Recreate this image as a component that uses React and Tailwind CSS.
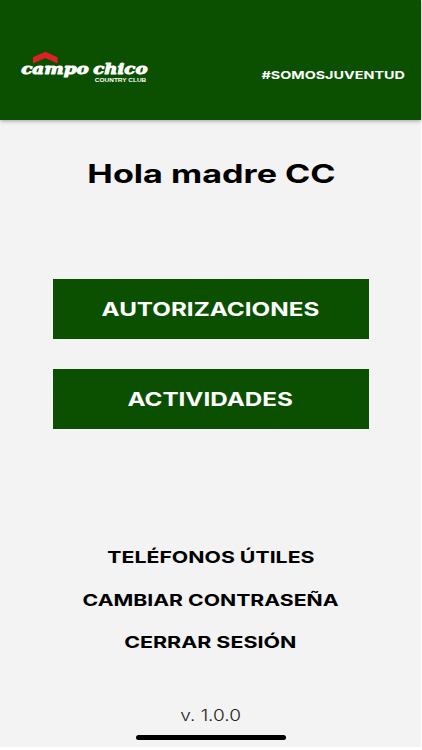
const menuItems = ['AUTORIZACIONES', 'ACTIVIDADES'];

const links = [
  { label: 'TELÉFONOS ÚTILES', stretch: 'scale-x-[1.33]' },
  { label: 'CAMBIAR CONTRASEÑA', stretch: 'scale-x-[1.325]' },
  { label: 'CERRAR SESIÓN', stretch: 'scale-x-[1.34]' },
];

function Logo() {
  return (
    <svg className="w-[132px] h-9" viewBox="0 0 132 36" aria-label="Campo Chico Country Club">
      <path d="M13 6.2 L25.3 0.8 L37.5 6.2 V12.4 L25.3 7 L13 12.4 Z" fill="#df2027" />
      <g
        fill="#fff"
        stroke="#fff"
        strokeWidth="1"
        strokeLinejoin="round"
        fontFamily="'DejaVu Serif', serif"
        fontWeight="700"
        fontStyle="italic"
        fontSize="15.5"
      >
        <text x="1.2" y="23.3" textLength="67.6" lengthAdjust="spacingAndGlyphs">campo</text>
        <text x="73.2" y="23.3" textLength="54.3" lengthAdjust="spacingAndGlyphs">chico</text>
      </g>
      <text
        x="74.8"
        y="30.8"
        fill="#fff"
        fontFamily="'Liberation Sans', sans-serif"
        fontWeight="700"
        fontSize="6"
        textLength="51.5"
        lengthAdjust="spacingAndGlyphs"
      >
        COUNTRY CLUB
      </text>
    </svg>
  );
}

function Header() {
  return (
    <header className="h-[120px] shrink-0 bg-[#0a5000] shadow-[0_1px_4px_rgba(0,0,0,0.35)] flex items-start justify-between pl-5 pr-4 pt-[51px]">
      <Logo />
      <span className="mt-4 text-[11px] leading-4 font-bold text-white whitespace-nowrap origin-right scale-x-[1.305]">
        #SOMOSJUVENTUD
      </span>
    </header>
  );
}

function App() {
  return (
    <div className="h-[750px] bg-white overflow-hidden font-['Inter',sans-serif]">
      <div className="w-[421px] h-[747px] bg-[#f3f3f3] flex flex-col">
        <Header />

        <main className="flex flex-col items-center">
          <h1 className="mt-[38px] pl-px text-[25.7px] leading-8 font-bold text-black whitespace-nowrap scale-x-[1.33]">
            Hola madre CC
          </h1>

          <div className="mt-[89px] flex flex-col gap-[30px]">
            {menuItems.map((item) => (
              <button
                key={item}
                className="w-[316px] h-[60px] pt-0.5 bg-[#0a5000] text-white text-[18.8px] font-bold flex items-center justify-center"
              >
                <span className="whitespace-nowrap scale-x-[1.29]">{item}</span>
              </button>
            ))}
          </div>

          <nav className="mt-[116px] flex flex-col items-center gap-[18.5px]">
            {links.map(({ label, stretch }) => (
              <a
                key={label}
                className={`text-base leading-6 font-bold text-black whitespace-nowrap ${stretch}`}
              >
                {label}
              </a>
            ))}
          </nav>
        </main>

        <footer className="mt-auto mb-[7px] flex flex-col items-center">
          <span className="mb-2 text-base leading-6 font-light text-[#222] whitespace-nowrap scale-x-[1.19]">
            v. 1.0.0
          </span>
          <div className="w-[150px] h-[5px] rounded-full bg-black" />
        </footer>
      </div>
    </div>
  );
}

export default App;
